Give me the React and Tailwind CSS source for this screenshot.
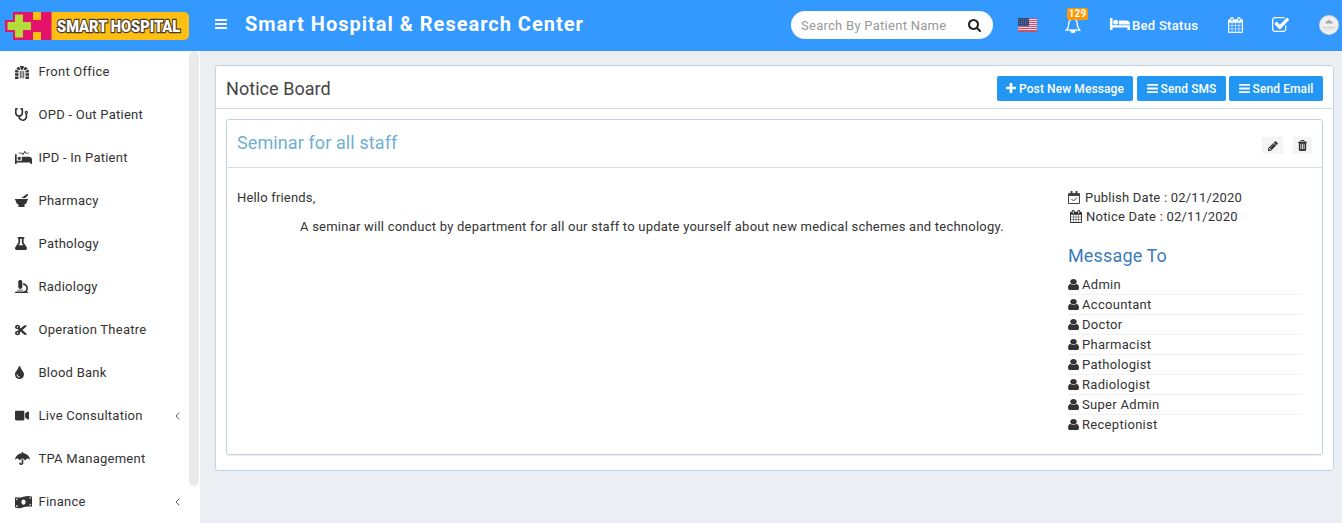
import {
  FaDungeon, FaStethoscope, FaProcedures, FaMortarPestle, FaFlask, FaMicroscope,
  FaCut, FaTint, FaVideo, FaUmbrella, FaMoneyBillWave,
} from "react-icons/fa";

const PATHS = {
  calendar: "M192 1664h288v-288h-288v288zm352 0h320v-288h-320v288zm-352-352h288v-320h-288v320zm352 0h320v-320h-320v320zm-352-384h288v-288h-288v288zm736 736h320v-288h-320v288zm-384-736h320v-288h-320v288zm768 736h288v-288h-288v288zm-384-352h320v-320h-320v320zm-352-864v-288q0-13-9.5-22.5t-22.5-9.5h-64q-13 0-22.5 9.5t-9.5 22.5v288q0 13 9.5 22.5t22.5 9.5h64q13 0 22.5-9.5t9.5-22.5zm736 864h288v-320h-288v320zm-384-384h320v-288h-320v288zm384 0h288v-288h-288v288zm32-480v-288q0-13-9.5-22.5t-22.5-9.5h-64q-13 0-22.5 9.5t-9.5 22.5v288q0 13 9.5 22.5t22.5 9.5h64q13 0 22.5-9.5t9.5-22.5zm384-64v1280q0 52-38 90t-90 38h-1408q-52 0-90-38t-38-90v-1280q0-52 38-90t90-38h128v-96q0-66 47-113t113-47h64q66 0 113 47t47 113v96h384v-96q0-66 47-113t113-47h64q66 0 113 47t47 113v96h128q52 0 90 38t38 90z",
  check: "M1472 930v318q0 119-84.5 203.5t-203.5 84.5h-832q-119 0-203.5-84.5t-84.5-203.5v-832q0-119 84.5-203.5t203.5-84.5h832q63 0 117 25 15 7 18 23 3 17-9 29l-49 49q-10 10-23 10-3 0-9-2-23-6-45-6h-832q-66 0-113 47t-47 113v832q0 66 47 113t113 47h832q66 0 113-47t47-113v-254q0-13 9-22l64-64q10-10 23-10 6 0 12 3 20 8 20 29zm231-489l-814 814q-24 24-57 24t-57-24l-430-430q-24-24-24-57t24-57l110-110q24-24 57-24t57 24l263 263 647-647q24-24 57-24t57 24l110 110q24 24 24 57t-24 57z",
  search: "M1216 832q0-185-131.5-316.5t-316.5-131.5-316.5 131.5-131.5 316.5 131.5 316.5 316.5 131.5 316.5-131.5 131.5-316.5zm512 832q0 52-38 90t-90 38q-54 0-90-38l-343-342q-179 124-399 124-143 0-273.5-55.5t-225-150-150-225-55.5-273.5 55.5-273.5 150-225 225-150 273.5-55.5 273.5 55.5 225 150 150 225 55.5 273.5q0 220-124 399l343 343q37 37 37 90z",
  plus: "M1600 736v192q0 40-28 68t-68 28h-416v416q0 40-28 68t-68 28h-192q-40 0-68-28t-28-68v-416h-416q-40 0-68-28t-28-68v-192q0-40 28-68t68-28h416v-416q0-40 28-68t68-28h192q40 0 68 28t28 68v416h416q40 0 68 28t28 68z",
  bars: "M1664 1344v128q0 26-19 45t-45 19h-1408q-26 0-45-19t-19-45v-128q0-26 19-45t45-19h1408q26 0 45 19t19 45zm0-512v128q0 26-19 45t-45 19h-1408q-26 0-45-19t-19-45v-128q0-26 19-45t45-19h1408q26 0 45 19t19 45zm0-512v128q0 26-19 45t-45 19h-1408q-26 0-45-19t-19-45v-128q0-26 19-45t45-19h1408q26 0 45 19t19 45z",
  user: "M1536 1399q0 109-62.5 187t-150.5 78h-854q-88 0-150.5-78t-62.5-187q0-85 8.5-160.5t31.5-152 58.5-131 94-89 134.5-34.5q131 128 313 128t313-128q76 0 134.5 34.5t94 89 58.5 131 31.5 152 8.5 160.5zm-256-887q0 159-112.5 271.5t-271.5 112.5-271.5-112.5-112.5-271.5 112.5-271.5 271.5-112.5 271.5 112.5 112.5 271.5z",
  pencil: "M491 1536l91-91-235-235-91 91v107h128v128h107zm523-928q0-22-22-22-10 0-17 7l-542 542q-7 7-7 17 0 22 22 22 10 0 17-7l542-542q7-7 7-17zm-54-192l416 416-832 832h-416v-416zm683 96q0 53-37 90l-166 166-416-416 166-165q36-38 90-38 53 0 91 38l235 234q37 39 37 91z",
  trash: "M704 1376v-704q0-14-9-23t-23-9h-64q-14 0-23 9t-9 23v704q0 14 9 23t23 9h64q14 0 23-9t9-23zm256 0v-704q0-14-9-23t-23-9h-64q-14 0-23 9t-9 23v704q0 14 9 23t23 9h64q14 0 23-9t9-23zm256 0v-704q0-14-9-23t-23-9h-64q-14 0-23 9t-9 23v704q0 14 9 23t23 9h64q14 0 23-9t9-23zm-544-992h448l-48-117q-7-9-17-11h-317q-10 2-17 11zm928 32v64q0 14-9 23t-23 9h-96v948q0 83-47 143.5t-113 60.5h-832q-66 0-113-58.5t-47-141.5v-952h-96q-14 0-23-9t-9-23v-64q0-14 9-23t23-9h309l70-167q15-37 54-63t79-26h320q40 0 79 26t54 63l70 167h309q14 0 23 9t9 23z",
};

function Icon({ name, box = "0 0 1792 1792", className }) {
  return (
    <svg viewBox={box} fill="currentColor" preserveAspectRatio="none" className={`shrink-0 ${className}`}>
      <path d={PATHS[name]} />
    </svg>
  );
}

const NAV = [
  { label: "Front Office", icon: FaDungeon, size: "h-[13px] w-[14px]" },
  { label: "OPD - Out Patient", icon: FaStethoscope, size: "h-[13px] w-[13px]" },
  { label: "IPD - In Patient", icon: FaProcedures, size: "h-[13px] w-[17px]" },
  { label: "Pharmacy", icon: FaMortarPestle, size: "h-[13px] w-[13px]" },
  { label: "Pathology", icon: FaFlask, size: "h-[13px] w-[12px]" },
  { label: "Radiology", icon: FaMicroscope, size: "h-[13px] w-[13px]" },
  { label: "Operation Theatre", icon: FaCut, size: "h-[12px] w-[12px]" },
  { label: "Blood Bank", icon: FaTint, size: "h-[13px] w-[9px]" },
  { label: "Live Consultation", icon: FaVideo, size: "h-[13px] w-[14px]", more: true },
  { label: "TPA Management", icon: FaUmbrella, size: "h-[13px] w-[15px]" },
  { label: "Finance", icon: FaMoneyBillWave, size: "h-[14px] w-[17px]", more: true },
];

const RECIPIENTS = ["Admin", "Accountant", "Doctor", "Pharmacist", "Pathologist", "Radiologist", "Super Admin", "Receptionist"];

function Logo() {
  return (
    <div className="mt-px flex h-7 w-[184px] shrink-0">
      <svg viewBox="0 0 47 28" className="h-7 w-[47px] shrink-0">
        <path d="M28 0H47V28H28z" fill="#ffbf12" />
        <path d="M8 0H28V8H36V0H46.500V28H36V20H28V28H8V20H0V8H8z" fill="#e5126c" />
        <path d="M10 2.500H18V10H26V18H18V25.500H10V18H2.500V10H10z" fill="#b2dd3b" />
      </svg>
      <div className="flex w-[137px] shrink-0 items-center rounded-r-[5px] bg-[#ffbf12] pl-[5px]">
        <span className="origin-left scale-x-[0.86] whitespace-nowrap font-['Roboto',sans-serif] text-[17px] font-black leading-7 tracking-normal text-white [paint-order:stroke] [-webkit-text-stroke:2.500px_#4a3b28]">SMART HOSPITAL</span>
      </div>
    </div>
  );
}

function Flag() {
  return (
    <svg viewBox="0 0 19 14" className="ml-[25px] h-[14px] w-[19px] shrink-0" shapeRendering="crispEdges">
      <rect width="19" height="14" fill="#e3dbe6" />
      {[0, 2, 4, 6, 8, 10, 12].map((y) => <rect key={y} y={y} width="19" height="1" fill="#c9506a" />)}
      <rect width="11" height="8" fill="#34487c" />
      {[1, 3, 5, 7].map((y) =>
        [1, 3, 5, 7, 9].map((x) => <rect key={`${x}-${y}`} x={x} y={y} width="1" height="1" fill="#5f6e98" />)
      )}
      <rect y="13" width="19" height="1" fill="#c9506a" />
    </svg>
  );
}

function Header() {
  return (
    <header className="flex h-[51px] shrink-0 items-center bg-[#3399ff] pb-px pl-[5px] text-white">
      <Logo />
      <Icon name="bars" box="128 256 1536 1280" className="mb-[2px] ml-[26px] h-[10px] w-[12px]" />
      <h1 className="mb-[3px] ml-[18px] w-[546px] text-xl font-bold tracking-[0.99px]">Smart Hospital &amp; Research Center</h1>
      <div className="flex h-7 w-[202px] shrink-0 items-center rounded-full bg-white px-[10px] text-[13px] tracking-[0.27px] text-[#999]">
        <span className="w-[167px] pt-px">Search By Patient Name</span>
        <Icon name="search" box="64 128 1664 1664" className="h-[13px] w-[13px] text-[#222]" />
      </div>
      <Flag />
      <div className="relative ml-[28px] h-[16px] w-[16px] shrink-0">
        <svg viewBox="0 0 16 16" className="h-4 w-4" fill="none" stroke="#fff" strokeWidth="1.300">
          <path d="M8 .5V2M3.800 6.500C3.800 3.800 5.500 2.200 8 2.200S12.200 3.800 12.200 6.500C12.200 10.500 13 11.500 14.800 13.200H1.200C3 11.500 3.800 10.500 3.800 6.500z" />
          <path d="M6 13.500a2 2 0 0 0 4 0z" fill="#fff" />
        </svg>
        <span className="absolute left-[2px] top-[-9px] flex h-3 w-[21px] items-center justify-center rounded-[2px] bg-[#ff9800] text-[10px] font-bold leading-none tracking-[0.1px]">129</span>
      </div>
      <svg viewBox="0 256 2048 1280" fill="currentColor" preserveAspectRatio="none" className="mb-[2px] ml-[29px] h-[12px] w-[20px] shrink-0">
        <path d="M256 1024h1728q26 0 45 19t19 45v448h-256v-256h-1536v256h-256v-1216q0-26 19-45t45-19h128q26 0 45 19t19 45v704zm576-320q0-106-75-181t-181-75-181 75-75 181 75 181 181 75 181-75 75-181zm1216 256v-64q0-159-112.500-271.500t-271.500-112.500h-704q-26 0-45 19t-19 45v384h1152z" />
      </svg>
      <span className="ml-[2px] w-[96px] shrink-0 whitespace-nowrap pt-px text-[13px] font-medium tracking-[0.3px]">Bed Status</span>
      <Icon name="calendar" box="64 0 1664 1792" className="h-4 w-[15px]" />
      <Icon name="check" box="64 128 1664 1408" className="mb-px ml-[29px] h-[15px] w-[17px]" />
      <svg viewBox="0 0 20 20" className="ml-[30px] h-5 w-5 shrink-0">
        <circle cx="10" cy="10" r="10" fill="#d8d8da" />
        <circle cx="10" cy="10" r="9" fill="#f0f0f1" />
        <path d="M6 8.500L7.500 6h1L10 4.500 11.500 6h1L14 8.500z" fill="#aaa" />
        <path d="M4 12.500h12" stroke="#c8c8cc" strokeWidth="1.500" strokeDasharray="2 .6" />
        <path d="M5 15h9" stroke="#dadadd" />
      </svg>
    </header>
  );
}

function Sidebar() {
  return (
    <aside className="flex w-[200px] shrink-0 overflow-hidden bg-white">
      <nav className="w-[189px] shrink-0">
        {NAV.map(({ label, icon: NavIcon, size, more }, i) => (
          <div key={label} className={`flex items-center pl-[15px] pr-[9px] ${i === 0 ? "h-[42px]" : "h-[43px]"}`}>
            <span className="flex w-[23.500px] shrink-0">
              <NavIcon className={`shrink-0 ${size}`} preserveAspectRatio="none" />
            </span>
            <span className="flex-1 whitespace-nowrap">{label}</span>
            {more && (
              <svg viewBox="0 0 5 8" className="h-2 w-[5px]" fill="none" stroke="#555">
                <path d="M4.300.6L1 4l3.300 3.400" />
              </svg>
            )}
          </div>
        ))}
      </nav>
      <div className="h-[435px] w-[10px] rounded-[5px] bg-[#eaeaea]" />
    </aside>
  );
}

function ActionButton({ icon, box, iconSize, className, children }) {
  return (
    <button className={`flex h-[25px] items-center justify-center gap-[3px] whitespace-nowrap rounded-[2px] bg-[#2196f3] text-[12px] font-medium tracking-[0.1px] text-white ${className}`}>
      <Icon name={icon} box={box} className={iconSize} />
      <span className="pt-px">{children}</span>
    </button>
  );
}

function Notice() {
  return (
    <article className="mx-[10px] mt-[10px] h-[336px] rounded-[3px] border border-[#c3d3dd] shadow-[0_1px_1px_rgba(0,0,0,0.08)]">
      <div className="flex h-[48px] items-center border-b border-[#d5dfe6] px-[10px]">
        <h3 className="flex-1 pb-[2px] text-lg tracking-[0.1px] text-[#72afd2]">Seminar for all staff</h3>
        <div className="flex gap-[10px] pt-1">
          <button className="flex h-[17px] w-[21px] items-center justify-center rounded-[2px] bg-[#f4f4f4]">
            <Icon name="pencil" box="128 128 1536 1536" className="h-[10px] w-[10px]" />
          </button>
          <button className="flex h-[17px] w-[19px] items-center justify-center rounded-[2px] bg-[#f4f4f4]">
            <Icon name="trash" box="192 128 1408 1536" className="h-[11px] w-[9px]" />
          </button>
        </div>
      </div>
      <div className="flex pl-[10px] pr-[20px] pt-5">
        <div className="flex-1 leading-[19px]">
          <p className="tracking-[0.18px]">Hello friends,</p>
          <p className="mt-[10px] whitespace-nowrap pl-[63px] tracking-[0.230px]">A seminar will conduct by department for all our staff to update yourself about new medical schemes and technology.</p>
        </div>
        <div className="w-[234px] shrink-0">
          <div className="flex h-[19px] items-center tracking-[0.22px]">
            <svg viewBox="0 0 12 13" className="mr-[5px] h-[13px] w-3" fill="none" stroke="#444">
              <path d="M.5 2.500h11v10H.5zM.5 4.500h11" />
              <path d="M.5 3.500h11" />
              <path d="M3.500 0v3M8.500 0v3" strokeWidth="2" />
              <path d="M3.500 8l2 2L9 6.500" />
            </svg>
            Publish Date : 02/11/2020
          </div>
          <div className="flex h-[19px] items-center pl-[2px] tracking-[0.22px]">
            <Icon name="calendar" box="64 0 1664 1792" className="mr-1 h-[13px] w-3" />
            Notice Date : 02/11/2020
          </div>
          <h3 className="mb-[7px] mt-[17px] text-lg leading-[25px] tracking-[0.150px] text-[#3c7cb8]">Message To</h3>
          <ul>
            {RECIPIENTS.map((name) => (
              <li key={name} className="flex h-5 items-center gap-[3px] border-b border-[#f1f1f1] tracking-[0.300px] last:border-transparent">
                <Icon name="user" box="256 128 1280 1536" className="h-[11px] w-[11px]" />
                {name}
              </li>
            ))}
          </ul>
        </div>
      </div>
    </article>
  );
}

export default function App() {
  return (
    <div className="flex h-[523px] w-[1342px] flex-col overflow-hidden bg-[#ebeff4] font-['Roboto','Liberation_Sans',sans-serif] text-[13px] tracking-[0.25px] text-[#333]">
      <Header />
      <div className="flex min-h-0 flex-1">
        <Sidebar />
        <main className="flex-1 pl-[15px] pr-2 pt-[14px]">
          <section className="h-[406px] rounded-[3px] border border-[#c3d3dd] bg-white">
            <div className="flex h-[43px] items-center border-b border-[#d5dfe6] px-[10px]">
              <h2 className="flex-1 pt-1 text-lg tracking-[0.05px] text-[#444]">Notice Board</h2>
              <div className="flex pt-[2px]">
                <ActionButton icon="plus" box="192 128 1408 1408" iconSize="h-[10px] w-[10px]" className="w-[136px]">Post New Message</ActionButton>
                <ActionButton icon="bars" box="128 256 1536 1280" iconSize="h-[9px] w-[11px]" className="ml-1 w-[89px]">Send SMS</ActionButton>
                <ActionButton icon="bars" box="128 256 1536 1280" iconSize="h-[9px] w-[11px]" className="ml-[3px] w-[94px]">Send Email</ActionButton>
              </div>
            </div>
            <Notice />
          </section>
        </main>
      </div>
    </div>
  );
}
